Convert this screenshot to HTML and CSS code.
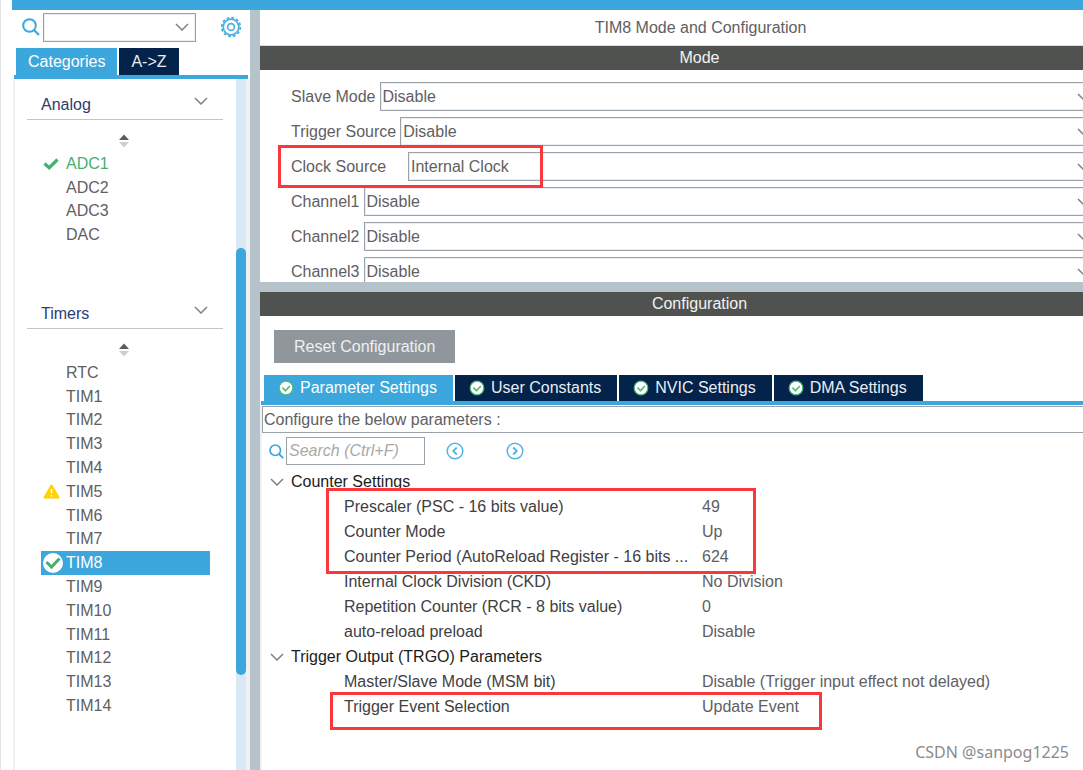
FILE: index.html
```html
<!DOCTYPE html>
<html lang="en">
<head>
<meta charset="utf-8">
<title>TIM8 Mode and Configuration</title>
<link rel="stylesheet" href="styles.css">
</head>
<body>
<svg class="defs" aria-hidden="true">
  <symbol id="chevron" viewBox="0 0 14 8"><path d="M1 1l6 6 6-6" fill="none" stroke="currentColor" stroke-width="1.5"/></symbol>
  <symbol id="search" viewBox="0 0 18 18"><circle cx="7.5" cy="7.5" r="6.3" fill="none" stroke="currentColor" stroke-width="2"/><path d="M12 12l5 5" stroke="currentColor" stroke-width="2.2"/></symbol>
  <symbol id="sort" viewBox="0 0 10 14"><path d="M5 0.5L10 6H0z" fill="#5c5c5c"/><path d="M5 13.5L0 8h10z" fill="#cfcfcf"/></symbol>
  <symbol id="ok" viewBox="0 0 16 16"><circle cx="8" cy="8" r="6.8" fill="#fff" stroke="#4fb877" stroke-width="1.2"/><path d="M4.4 7.6l3.1 3 4.4-4.6" fill="none" stroke="#5dbd82" stroke-width="1.8"/></symbol>
</svg>
<div class="app">
  <aside class="sidebar">
    <div class="finder">
      <svg class="icon-search"><use href="#search"/></svg>
      <span class="combo finder-combo">
        <select aria-label="Search peripherals"><option></option></select>
        <svg class="chevron"><use href="#chevron"/></svg>
      </span>
      <button class="plain gear" aria-label="Settings">
        <svg width="22" height="22" viewBox="0 0 22 22" fill="none" stroke="#4aaede"><circle cx="11" cy="11" r="9.3" stroke-width="1.8" stroke-dasharray="2.87 2"/><circle cx="11" cy="11" r="7.8" stroke-width="1.7"/><circle cx="11" cy="11" r="3.4" stroke-width="1.6"/></svg>
      </button>
    </div>
    <nav class="tabs side-tabs">
      <button class="tab active">Categories</button>
      <button class="tab">A-&gt;Z</button>
    </nav>
    <div class="side-body">
      <div class="groups">
        <section class="group">
          <h2 class="group-head">Analog <svg class="chevron"><use href="#chevron"/></svg></h2>
          <div class="sort"><svg><use href="#sort"/></svg></div>
          <ul class="items items-analog">
            <li class="good"><svg class="mark" viewBox="0 0 16 12"><path d="M1.5 5.5l4.7 4.3L14.5 1.5" fill="none" stroke="#44b070" stroke-width="3.2"/></svg>ADC1</li>
            <li>ADC2</li><li>ADC3</li><li>DAC</li>
          </ul>
        </section>
        <section class="group">
          <h2 class="group-head">Timers <svg class="chevron"><use href="#chevron"/></svg></h2>
          <div class="sort"><svg><use href="#sort"/></svg></div>
          <ul class="items items-timers">
            <li>RTC</li><li>TIM1</li><li>TIM2</li><li>TIM3</li><li>TIM4</li>
            <li><svg class="warn" viewBox="0 0 17 15"><path d="M8.5 1.5L15.5 13.5h-14z" fill="#ffd200" stroke="#ffd200" stroke-width="2" stroke-linejoin="round"/><path d="M8.5 5v4.5M8.5 11v1.7" stroke="#fff" stroke-width="1.5"/></svg>TIM5</li>
            <li>TIM6</li><li>TIM7</li>
            <li class="selected"><svg class="badge" viewBox="0 0 20 20"><circle cx="10" cy="10" r="10" fill="#fff"/><path d="M3.5 9l5 5 8-8.5" fill="none" stroke="#44b070" stroke-width="3"/></svg>TIM8</li>
            <li>TIM9</li><li>TIM10</li><li>TIM11</li><li>TIM12</li><li>TIM13</li><li>TIM14</li>
          </ul>
        </section>
      </div>
      <div class="track"><div class="thumb"></div></div>
    </div>
  </aside>

  <main class="main">
    <h1 class="title">TIM8 Mode and Configuration</h1>
    <h2 class="bar">Mode</h2>
    <form class="modes">
      <div class="field"><label for="slave">Slave Mode</label><span class="combo"><select id="slave"><option>Disable</option></select><svg class="chevron"><use href="#chevron"/></svg></span></div>
      <div class="field"><label for="trigger">Trigger Source</label><span class="combo"><select id="trigger"><option>Disable</option></select><svg class="chevron"><use href="#chevron"/></svg></span></div>
      <div class="field"><label class="wide" for="clock">Clock Source</label><span class="combo"><select id="clock"><option>Internal Clock</option></select><svg class="chevron"><use href="#chevron"/></svg></span></div>
      <div class="field"><label for="ch1">Channel1</label><span class="combo"><select id="ch1"><option>Disable</option></select><svg class="chevron"><use href="#chevron"/></svg></span></div>
      <div class="field"><label for="ch2">Channel2</label><span class="combo"><select id="ch2"><option>Disable</option></select><svg class="chevron"><use href="#chevron"/></svg></span></div>
      <div class="field"><label for="ch3">Channel3</label><span class="combo"><select id="ch3"><option>Disable</option></select><svg class="chevron"><use href="#chevron"/></svg></span></div>
    </form>
    <div class="splitter"></div>
    <h2 class="bar">Configuration</h2>
    <div class="actions"><button class="reset">Reset Configuration</button></div>
    <nav class="tabs main-tabs">
      <button class="tab active"><svg><use href="#ok"/></svg>Parameter Settings</button>
      <button class="tab"><svg><use href="#ok"/></svg>User Constants</button>
      <button class="tab"><svg><use href="#ok"/></svg>NVIC Settings</button>
      <button class="tab"><svg><use href="#ok"/></svg>DMA Settings</button>
    </nav>
    <div class="panel">
      <p class="hint">Configure the below parameters :</p>
      <div class="param-search">
        <svg class="icon-search"><use href="#search"/></svg>
        <input type="text" placeholder="Search (Ctrl+F)" aria-label="Search parameters">
        <button class="plain step" aria-label="Previous"><svg width="18" height="18" viewBox="0 0 18 18" fill="none" stroke="#55b4e2" stroke-width="1.5"><circle cx="9" cy="9" r="7.8"/><path d="M10.8 5.5L7.2 9l3.6 3.5" stroke-width="1.8"/></svg></button>
        <button class="plain step" aria-label="Next"><svg width="18" height="18" viewBox="0 0 18 18" fill="none" stroke="#55b4e2" stroke-width="1.5"><circle cx="9" cy="9" r="7.8"/><path d="M7.2 5.5L10.8 9l-3.6 3.5" stroke-width="1.8"/></svg></button>
      </div>
      <table class="params">
        <tbody>
          <tr class="head"><th colspan="2"><button class="plain"><svg class="chevron"><use href="#chevron"/></svg>Counter Settings</button></th></tr>
          <tr><th>Prescaler (PSC - 16 bits value)</th><td>49</td></tr>
          <tr><th>Counter Mode</th><td>Up</td></tr>
          <tr><th>Counter Period (AutoReload Register - 16 bits ...</th><td>624</td></tr>
          <tr><th>Internal Clock Division (CKD)</th><td>No Division</td></tr>
          <tr><th>Repetition Counter (RCR - 8 bits value)</th><td>0</td></tr>
          <tr><th>auto-reload preload</th><td>Disable</td></tr>
        </tbody>
        <tbody>
          <tr class="head"><th colspan="2"><button class="plain"><svg class="chevron"><use href="#chevron"/></svg>Trigger Output (TRGO) Parameters</button></th></tr>
          <tr><th>Master/Slave Mode (MSM bit)</th><td>Disable (Trigger input effect not delayed)</td></tr>
          <tr><th>Trigger Event Selection</th><td>Update Event</td></tr>
        </tbody>
      </table>
    </div>
  </main>
</div>
<div class="callout callout-clock"></div>
<div class="callout callout-counter"></div>
<div class="callout callout-event"></div>
<div class="watermark">CSDN @sanpog1225</div>
</body>
</html>
```
FILE: styles.css
```css
* { box-sizing: border-box; }
body {
  margin: 0;
  position: relative;
  overflow: hidden;
  background: #fff;
  color: #5f6062;
  font: 16px/24px "Liberation Sans", Arial, sans-serif;
}
h1, h2, p, ul { margin: 0; padding: 0; font-size: 16px; font-weight: normal; list-style: none; }
button, input, select { font: inherit; color: inherit; border-radius: 0; }
.plain { display: flex; align-items: center; padding: 0; border: 0; background: none; }
.defs { position: absolute; width: 0; height: 0; }
.chevron { width: 14px; height: 8px; color: #808080; flex: none; }
.icon-search { color: #3ba7dc; flex: none; }

.app {
  display: grid;
  grid-template-columns: 248px 1fr;
  min-height: 100vh;
  margin-left: 12px;
  border-top: 10px solid #3ba7dc;
}
.app::before { content: ""; position: absolute; inset: 0 auto 0 0; width: 1px; background: #e3e5e7; }

/* Sidebar */
.sidebar { display: flex; flex-direction: column; border-right: 10px solid #b7c3ca; }
.finder { display: flex; align-items: center; height: 38px; padding: 0 8px 4px 10px; }
.finder .icon-search { width: 18px; height: 18px; }
.combo { display: grid; align-items: center; flex: 1; }
.combo select {
  grid-area: 1 / 1;
  width: 100%;
  height: 29px;
  padding: 0 2px;
  border: 1px solid #9aa2a9;
  background: #fff;
  appearance: none;
  box-shadow: inset 0 0 0 1px #eceff1;
}
.combo .chevron { grid-area: 1 / 1; justify-self: end; margin-right: 7px; pointer-events: none; }
.finder-combo { margin: 0 24px 0 3px; }
.tabs { display: flex; gap: 2px; border-bottom: 4px solid #3ba7dc; }
.tab { display: flex; align-items: center; height: 26px; padding: 0 16px 0 14px; border: 0; background: #03234b; color: #e9edf2; }
.tab.active { background: #3ba7dc; color: #fff; }
.side-tabs { margin: 0 2px; padding-left: 2px; }
.side-tabs .tab { height: 27px; padding: 0 12px; }
.side-body { display: flex; flex: 1; border: solid #eff1f4; border-width: 0 4px 0 2px; margin-left: 1px; }
.groups { flex: 1; padding: 10px 13px 0 12px; }
.group + .group { margin-top: 51px; }
.group-head {
  display: flex;
  justify-content: space-between;
  height: 31px;
  padding: 4px 15px 0 14px;
  border-bottom: 1px solid #bfc7cd;
  color: #2f3a70;
}
.group-head .chevron { margin-top: 4px; }
.sort { display: flex; justify-content: center; height: 32px; padding: 14px 2px 0 0; }
.sort svg { width: 10px; height: 14px; }
.items { display: flex; flex-direction: column; margin: 0 13px 0 14px; line-height: 20px; }
.items li { display: flex; flex: 1; align-items: center; position: relative; padding-left: 25px; }
.items-analog { height: 95px; }
.items-timers { height: 357px; }
.items .good { color: #44b070; }
.items .selected { background: #3ba7dc; color: #fff; }
.items svg { position: absolute; left: 2px; }
.mark { width: 16px; height: 12px; }
.warn { width: 17px; height: 15px; }
.badge { width: 20px; height: 20px; }
.track { width: 10px; padding-top: 169px; background: #d8e8f5; }
.thumb { height: 427px; border-radius: 5px; background: #3ba7dc; }

/* Main area */
.main { display: flex; flex-direction: column; min-width: 0; overflow: hidden; }
.title { height: 36px; margin-right: -58px; padding-top: 6px; text-align: center; border-bottom: 1px solid #dcdcdc; }
.bar { flex: none; height: 24px; margin-right: -56px; background: #50524f; color: #f2f2f2; text-align: center; }
.modes { display: flex; flex-direction: column; gap: 6px; height: 212px; margin-right: -15px; padding: 12px 0 0 31px; overflow: hidden; }
.field { display: flex; align-items: center; gap: 4px; height: 29px; flex: none; }
.field .wide { min-width: 113px; }
.splitter { height: 10px; background: #b7c3ca; }
.actions { padding: 14px 14px 12px; }
.reset { display: block; height: 33px; padding: 0 20px; border: 0; background: #8f979c; color: #eef0f1; }
.main-tabs { margin-left: 1px; padding-left: 3px; }
.main-tabs .tab { gap: 6px; }
.main-tabs svg { width: 16px; height: 16px; }
.panel { flex: 1; padding-top: 1px; border-left: 2px solid #eff1f4; }
.hint { height: 27px; padding: 1px 0 0 1px; border: 1px solid #9aa2a9; border-right: 0; }
.param-search { display: flex; align-items: center; height: 36px; padding: 0 7px; }
.param-search .icon-search { width: 15px; height: 15px; margin-right: 2px; }
.param-search input { width: 139px; height: 28px; margin-right: 21px; padding: 0 2px; border: 1px solid #9aa2a9; outline: 0; background: #fff; }
.param-search input::placeholder { color: #a9a9a9; font-style: italic; opacity: 1; }
.step + .step { margin-left: 42px; }
.params { width: 100%; border-collapse: collapse; table-layout: auto; }
.params tr { height: 25px; }
.params th { width: 440px; padding: 0 0 0 82px; color: #3f4043; font-weight: normal; text-align: left; white-space: nowrap; }
.params td { padding: 0; }
.params .head th { padding-left: 8px; color: #1b1c20; }
.params .head button { gap: 7px; }

/* Highlights drawn over the window */
.callout { position: absolute; border: 3px solid #fa373b; pointer-events: none; }
.callout-clock { left: 278px; top: 145px; width: 265px; height: 43px; }
.callout-counter { left: 326px; top: 488px; width: 430px; height: 86px; }
.callout-event { left: 330px; top: 692px; width: 492px; height: 38px; }
.watermark { position: absolute; right: 14px; bottom: 6px; color: #8b8b8b; font-family: "Noto Sans", sans-serif; font-size: 16px; }
```
